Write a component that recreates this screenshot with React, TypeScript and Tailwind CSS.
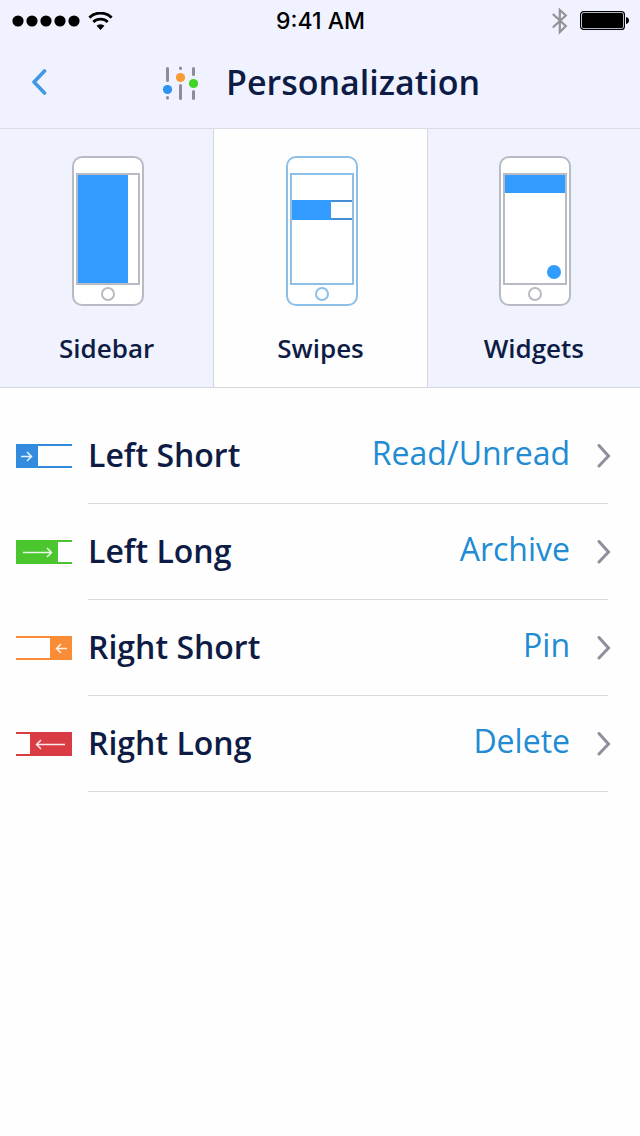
import { useState } from 'react'
import type { ReactNode } from 'react'

type TabId = 'sidebar' | 'swipes' | 'widgets'

const TABS: { id: TabId; label: string }[] = [
  { id: 'sidebar', label: 'Sidebar' },
  { id: 'swipes', label: 'Swipes' },
  { id: 'widgets', label: 'Widgets' },
]

const SWIPES = [
  { label: 'Left Short', value: 'Read/Unread', color: '#338be0', side: 'left', size: 22 },
  { label: 'Left Long', value: 'Archive', color: '#4cc62e', side: 'left', size: 42 },
  { label: 'Right Short', value: 'Pin', color: '#fa8c37', side: 'right', size: 22 },
  { label: 'Right Long', value: 'Delete', color: '#d93d43', side: 'right', size: 42 },
]

// ── Status bar ──

function StatusBar() {
  return (
    <div className="grid h-10 grid-cols-[1fr_auto_1fr] items-center pl-3 pr-[11px] pt-px">
      <div className="flex items-center gap-2">
        <svg width="68" height="12" viewBox="0 0 68 12" aria-hidden="true">
          {[6, 20, 34, 48, 62].map((cx) => (
            <circle key={cx} cx={cx} cy="6" r="5.6" />
          ))}
        </svg>
        <svg width="25" height="18" viewBox="0 0 25 18" aria-hidden="true">
          <path d="M1.4 5.6a16 16 0 0 1 22.2 0" fill="none" stroke="#000" strokeWidth="2.9" />
          <path d="M5.3 10a10.4 10.4 0 0 1 14.4 0" fill="none" stroke="#000" strokeWidth="2.9" />
          <path d="M12.5 18l-4-4.200a5.800 5.800 0 0 1 8 0z" />
        </svg>
      </div>
      <span className="font-['Inter','Liberation_Sans',sans-serif] text-[23px] font-medium leading-7 text-black">
        9:41 AM
      </span>
      <div className="flex items-center justify-end gap-3">
        <svg width="16" height="28" viewBox="0 0 16 28" fill="none" stroke="#929297" strokeWidth="2.2" aria-hidden="true">
          <path d="M.8 7l13 12-6 6V3l6 5.500-13 12" />
        </svg>
        <svg width="49" height="19" viewBox="0 0 49 19" aria-hidden="true">
          <rect x=".6" y=".6" width="43.8" height="17.8" rx="3" fill="none" stroke="#000" strokeWidth="1.2" />
          <rect x="2" y="2" width="41" height="15" rx="1.5" />
          <path d="M46 6c2 .4 3 1.6 3 3.5s-1 3.100-3 3.500z" />
        </svg>
      </div>
    </div>
  )
}

// ── Icons ──

function SlidersIcon() {
  return (
    <svg width="36" height="36" viewBox="0 0 36 36" aria-hidden="true">
      <g stroke="#8b8d9b" strokeWidth="3" strokeLinecap="round">
        <path d="M5.500 2.500v12M5.500 31.500v.5M18.500 2v.5M18.500 19.500v13M31.500 2.500v6M31.500 25.500v7" />
      </g>
      <circle cx="5.500" cy="23.500" r="4.600" fill="#2f92ee" />
      <circle cx="18.500" cy="11.500" r="4.600" fill="#f59b31" />
      <circle cx="31.500" cy="17.500" r="4.600" fill="#40d524" />
    </svg>
  )
}

function PhoneIcon({ stroke, children }: { stroke: string; children: ReactNode }) {
  return (
    <svg width="75" height="150" viewBox="-3 0 75 150" aria-hidden="true">
      <rect x="1" y="1" width="70" height="148" rx="9" fill="#fff" stroke={stroke} strokeWidth="2" />
      <rect x="5" y="18" width="62" height="110" fill="none" stroke={stroke} strokeWidth="2" />
      <circle cx="36" cy="138" r="6" fill="none" stroke={stroke} strokeWidth="2" />
      {children}
    </svg>
  )
}

function TabPicture({ id, active }: { id: TabId; active: boolean }) {
  return (
    <PhoneIcon stroke={active ? '#8cc0e9' : '#b8bac4'}>
      {id === 'sidebar' && <rect x="6" y="19" width="50" height="108" fill="#319bff" />}
      {id === 'swipes' && (
        <>
          <path d="M6 45h60M6 63h60" stroke="#4390d6" strokeWidth="2" />
          <rect x="6" y="44" width="39" height="20" fill="#319bff" />
        </>
      )}
      {id === 'widgets' && (
        <>
          <rect x="6" y="19" width="60" height="18" fill="#319bff" />
          <circle cx="55" cy="116" r="7" fill="#319bff" />
        </>
      )}
    </PhoneIcon>
  )
}

function SwipeIcon({ color, side, size }: { color: string; side: string; size: number }) {
  const start = size > 30 ? 7 : 5
  const tip = size > 30 ? 35.5 : 15.5
  return (
    <svg width="56" height="24" viewBox="0 0 56 24" className="shrink-0" aria-hidden="true">
      <g transform={side === 'right' ? 'translate(56 0) scale(-1 1)' : undefined}>
        <path d="M0 1h56M0 23h56" stroke={color} strokeWidth="2" />
        <rect width={size} height="24" fill={color} />
        <path
          d={`M${start} 12.5H${tip}M${tip - 4.5} 8l4.5 4.5-4.5 4.5`}
          fill="none"
          stroke="#fff"
          strokeOpacity=".88"
          strokeWidth="1.5"
        />
      </g>
    </svg>
  )
}

// ── Page ──

export default function App() {
  const [tab, setTab] = useState<TabId>('swipes')

  return (
    <div className="min-h-screen bg-[#fefefe] font-['Open_Sans','Noto_Sans',sans-serif] text-[#0e1c45]">
      <header className="border-b border-[#dadce6] bg-[#f0f3ff]">
        <StatusBar />
        <div className="grid h-[88px] grid-cols-[80px_1fr_80px] items-center">
          <button type="button" aria-label="Back" className="flex h-full items-center pb-1 pl-8">
            <svg width="16" height="28" viewBox="0 0 16 28" fill="none" aria-hidden="true">
              <path d="M12.5 3L2 14l10.5 11" stroke="#4398e4" strokeWidth="3.6" strokeLinecap="round" strokeLinejoin="round" />
            </svg>
          </button>
          <div className="flex items-center justify-center gap-7 pl-0.5">
            <SlidersIcon />
            <h1 className="pb-1 text-[34px] font-semibold leading-[48px]">Personalization</h1>
          </div>
        </div>
      </header>

      <div role="tablist" aria-label="Personalization" className="grid grid-cols-3 border-b border-[#d6d7dd]">
        {TABS.map((t) => (
          <button
            key={t.id}
            id={`tab-${t.id}`}
            type="button"
            role="tab"
            aria-selected={tab === t.id}
            onClick={() => setTab(t.id)}
            className={`flex flex-col items-center gap-6 border-l border-[#d6d7dd] pb-[21px] pt-[27px] first:border-l-0 ${
              tab === t.id ? 'bg-[#fefefe]' : 'bg-[#f0f2fe]'
            }`}
          >
            <TabPicture id={t.id} active={tab === t.id} />
            <span className="text-[26px] font-semibold leading-9">{t.label}</span>
          </button>
        ))}
      </div>

      {tab === 'swipes' && (
        <ul role="tabpanel" aria-labelledby="tab-swipes" className="pt-5">
          {SWIPES.map((s) => (
            <li key={s.label}>
              <button type="button" className="flex h-[95px] w-full items-center gap-4 pl-4 pr-7 pt-px text-left">
                <SwipeIcon color={s.color} side={s.side} size={s.size} />
                <span className="flex-1 pb-0.5 text-[32px] font-semibold leading-10">{s.label}</span>
                <span className="pb-1.5 text-[32px] leading-10 text-[#218bd3]">{s.value}</span>
                <svg width="26" height="24" viewBox="0 0 26 24" fill="none" className="shrink-0" aria-hidden="true">
                  <path d="M13 1.5L22.5 12 13 22" stroke="#8e8f9d" strokeWidth="3" strokeLinecap="round" />
                </svg>
              </button>
              <div className="ml-[88px] mr-8 border-b border-[#d8d9dc]" />
            </li>
          ))}
        </ul>
      )}
    </div>
  )
}
